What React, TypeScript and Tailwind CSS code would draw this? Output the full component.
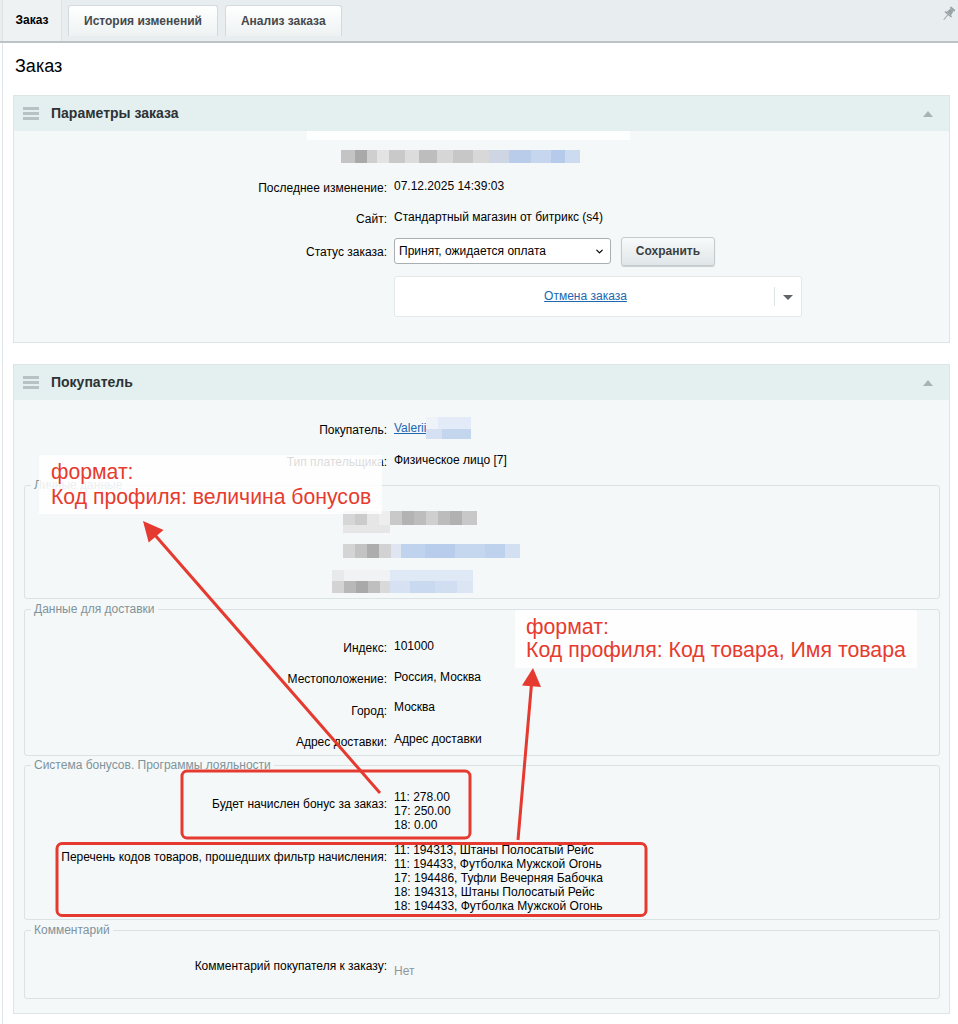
import React from 'react'
import { ChevronDown } from 'lucide-react'

type Seg = [number, string]

// blurred (hidden) data, drawn as soft pixel strips
function Blur({ segs, className = '' }: { segs: Seg[]; className?: string }) {
  return (
    <div className={`flex blur-[0.6px] ${className}`}>
      {segs.map(([w, c], i) => (
        <div key={i} className="h-full shrink-0" style={{ width: w, background: c }} />
      ))}
    </div>
  )
}

function Row({
  label,
  children,
  inner = false,
  className = 'h-[32px] pt-[8px]',
  labelClass = 'pt-[2px]',
}: {
  label: React.ReactNode
  children?: React.ReactNode
  inner?: boolean
  className?: string
  labelClass?: string
}) {
  return (
    <div className={`flex gap-[7px] ${className}`}>
      <div className={`${inner ? 'w-[362px]' : 'w-[373px]'} shrink-0 text-right ${labelClass}`}>{label}</div>
      <div className="min-w-0 flex-1">{children}</div>
    </div>
  )
}

function Panel({ title, children, className = '' }: { title: string; children: React.ReactNode; className?: string }) {
  return (
    <div className={`ml-[10px] mr-[8px] border border-[#dde5e7] bg-[#f5f8f9] ${className}`}>
      <div className="flex h-[35px] items-center bg-[#e4eff0] pl-[9px] pr-[16px]">
        <div className="flex w-[16px] flex-col gap-[2px]">
          <div className="h-[3px] bg-[#b8c2c4]" />
          <div className="h-[3px] bg-[#b8c2c4]" />
          <div className="h-[3px] bg-[#b8c2c4]" />
        </div>
        <span className="ml-[12px] text-[14px] font-bold text-[#2d3234]">{title}</span>
        <span className="ml-auto h-0 w-0 border-x-[5px] border-b-[6px] border-x-transparent border-b-[#a9b3b6]" />
      </div>
      {children}
    </div>
  )
}

function Fieldset({ legend, children, className = '' }: { legend: string; children: React.ReactNode; className?: string }) {
  return (
    <fieldset className={`ml-[10px] mr-[9px] rounded-[3px] border border-[#dae2e4] ${className}`}>
      <legend className="ml-[6px] px-[3px] text-[12px] leading-[15px] text-[#7f9399]">{legend}</legend>
      {children}
    </fieldset>
  )
}

function Tab({ children }: { children: React.ReactNode }) {
  return (
    <div className="mt-[5px] flex h-[31px] items-center rounded-t-[3px] border border-b-0 border-[#d3dadd] bg-gradient-to-b from-white to-[#eef2f3] px-[15px] text-[12px] font-bold text-[#45494b]">
      {children}
    </div>
  )
}

export default function App() {
  return (
    <div className="relative min-h-screen w-[958px] bg-white font-['Liberation_Sans',Arial,sans-serif] text-[12px] leading-[15px] text-black">
      {/* tabs */}
      <div className="flex h-[43px] items-start border-b-2 border-[#bcc3c6] bg-[#e8edef]">
        <div className="ml-[2px] flex h-[41px] w-[60px] items-center justify-center border-x border-[#dde3e5] bg-[#eef2f3] text-[12px] font-bold">
          Заказ
        </div>
        <div className="ml-[6px] flex gap-[7px]">
          <Tab>История изменений</Tab>
          <Tab>Анализ заказа</Tab>
        </div>
        <svg className="ml-auto mr-[3px] mt-[6px]" width="13" height="16" viewBox="0 0 13 16">
          <g transform="rotate(40 6.5 8)" fill="#9aa3a6">
            <rect x="3.5" y="0.5" width="6" height="2" rx="0.5" />
            <path d="M4.5 2.5h4l0.8 5h-5.6z" />
            <rect x="2.2" y="7.5" width="8.6" height="1.6" rx="0.5" />
            <rect x="6" y="9" width="1" height="6.5" />
          </g>
        </svg>
      </div>

      <div className="ml-[2px] border-l border-[#dfe5e8] pb-[10px]">
        <h1 className="pl-[12px] pt-[12px] text-[18px] leading-[22px] font-normal">Заказ</h1>

        {/* Параметры заказа */}
        <Panel title="Параметры заказа" className="mt-[18px]">
          <div className="h-[38px]">
            <Blur className="ml-[293px] h-[9px]" segs={[[323, '#fdfefe']]} />
            <Blur
              className="ml-[327px] mt-[10px] h-[13px]"
              segs={[
                [14, '#c4c4c4'], [12, '#a9a9a9'], [10, '#cfcfcf'], [12, '#e3e3e3'], [16, '#c9c9c9'],
                [14, '#dcdcdc'], [18, '#bdbdbd'], [16, '#d6d6d6'], [20, '#c7c7c7'], [16, '#d8d8d8'],
                [20, '#cdd6e2'], [22, '#b9cdea'], [20, '#c6d6ee'], [14, '#b6cbeb'], [15, '#cddbf0'],
              ]}
            />
          </div>
          <Row label="Последнее изменение:" className="h-[32px] pt-[10px]">07.12.2025 14:39:03</Row>
          <Row label="Сайт:" className="h-[32px] pt-[9px]">Стандартный магазин от битрикс (s4)</Row>
          <div className="flex h-[35px] items-center gap-[7px] pt-px">
            <div className="w-[373px] shrink-0 pt-[2px] text-right">Статус заказа:</div>
            <div className="relative flex h-[26px] w-[217px] items-center rounded-[3px] border border-[#a9b0b3] bg-white pl-[4px] pt-px">
              Принят, ожидается оплата
              <ChevronDown className="absolute right-[5px] top-[7px]" size={11} strokeWidth={2.6} />
            </div>
            <button className="ml-[3px] h-[29px] w-[94px] rounded-[3px] border border-[#c3cbce] bg-gradient-to-b from-[#f8fafa] to-[#e0e6e8] text-[12px] font-bold text-[#3a3f41] shadow-[0_1px_1px_rgba(0,0,0,0.18)]">
              Сохранить
            </button>
          </div>
          <div className="ml-[380px] mt-[8px] flex h-[41px] w-[408px] items-center rounded-[3px] border border-[#e3e9eb] bg-white">
            <div className="flex-1 pl-[2px] text-center">
              <a className="text-[#2067b0] underline">Отмена заказа</a>
            </div>
            <div className="h-[19px] w-px bg-[#dde3e5]" />
            <div className="flex w-[26px] justify-center pt-[2px]">
              <span className="h-0 w-0 border-x-[5px] border-t-[5px] border-x-transparent border-t-[#5f6568]" />
            </div>
          </div>
          <div className="h-[25px]" />
        </Panel>

        {/* Покупатель */}
        <Panel title="Покупатель" className="mt-[21px]">
          <div className="h-[13px]" />
          <Row label="Покупатель:">
            <div className="flex items-start">
              <a className="text-[#2067b0] underline">Valerii</a>
              <div className="-mt-[4px] flex flex-col">
                <Blur className="h-[12px]" segs={[[12, '#eef3fa'], [33, '#e2ebf7']]} />
                <Blur className="h-[10px]" segs={[[16, '#d5e1f2'], [29, '#c4d5ee']]} />
              </div>
            </div>
          </Row>
          <Row label="Тип плательщика:">Физическое лицо [7]</Row>

          <Fieldset legend="Личные данные" className="mt-[1px]">
            <div className="pt-[9px]">
              <div className="h-[32px] pl-[318px] pt-[9px]">
                <Blur
                  className="h-[14px]"
                  segs={[[12, '#d6d6d6'], [12, '#cbcbcb'], [12, '#e6e6e6'], [11, '#eeeeee'], [12, '#c9c9c9'], [12, '#b3b3b3'], [12, '#bdbdbd'], [12, '#cfcfcf'], [12, '#bcbcbc'], [12, '#b1b1b1'], [15, '#c8c8c8']]}
                />
                <Blur className="h-[8px]" segs={[[47, '#e6e6e6']]} />
              </div>
              <div className="h-[32px] pl-[318px] pt-[10px]">
                <Blur
                  className="h-[14px]"
                  segs={[[12, '#d4d4d4'], [12, '#c3c3c3'], [12, '#adadad'], [12, '#d2d2d2'], [10, '#dfe6f1'], [24, '#bfd2ee'], [30, '#b8cdeb'], [30, '#c5d6ef'], [20, '#bed1ed'], [15, '#d3e0f2']]}
                />
              </div>
              <div className="h-[32px] pl-[307px] pt-[4px]">
                <Blur className="h-[11px]" segs={[[12, '#e7e9eb'], [46, '#f0f2f4'], [83, '#dfe8f5']]} />
                <Blur
                  className="h-[12px]"
                  segs={[[12, '#d3d3d3'], [12, '#b8b8b8'], [12, '#a9a9a9'], [12, '#bfbfbf'], [10, '#d9d9d9'], [20, '#d6e2f3'], [25, '#c9d9f0'], [22, '#d1def2'], [16, '#dbe5f4']]}
                />
              </div>
            </div>
          </Fieldset>

          <Fieldset legend="Данные для доставки" className="mt-[3px]">
            <div className="pt-[12px]">
              <Row inner label="Индекс:" className="h-[31.5px] pt-[10px]">101000</Row>
              <Row inner label="Местоположение:" className="h-[31.5px] pt-[9px]">Россия, Москва</Row>
              <Row inner label="Город:" className="h-[31.5px] pt-[8px]" labelClass="pt-[4px]">Москва</Row>
              <Row inner label="Адрес доставки:" className="h-[31.5px] pt-[8px]" labelClass="pt-[3px]">Адрес доставки</Row>
            </div>
          </Fieldset>

          <Fieldset legend="Система бонусов. Программы лояльности" className="mt-[2px]">
            <div className="pb-[6px] pt-[17px] leading-[14px]">
              <Row inner label="Будет начислен бонус за заказ:" className="" labelClass="pt-[7px]">
                <div>11: 278.00</div>
                <div>17: 250.00</div>
                <div>18: 0.00</div>
              </Row>
              <Row inner label="Перечень кодов товаров, прошедших фильтр начисления:" className="mt-[11px]" labelClass="pt-[7px]">
                <div>11: 194313, Штаны Полосатый Рейс</div>
                <div>11: 194433, Футболка Мужской Огонь</div>
                <div>17: 194486, Туфли Вечерняя Бабочка</div>
                <div>18: 194313, Штаны Полосатый Рейс</div>
                <div>18: 194433, Футболка Мужской Огонь</div>
              </Row>
            </div>
          </Fieldset>

          <Fieldset legend="Комментарий" className="mt-[3px]">
            <Row inner label="Комментарий покупателя к заказу:" className="h-[60px] pt-[21px]" labelClass="">
              <div className="pt-[5px] text-[#8f9598]">Нет</div>
            </Row>
          </Fieldset>
          <div className="h-[14px]" />
        </Panel>
      </div>

      {/* annotations over the screenshot */}
      <div className="absolute left-[39px] top-[455px] h-[59px] w-[343px] bg-white/85 pl-[12px] pt-[4px] text-[21.2px] leading-[25px] text-[#e63b2e]">
        <div>формат:</div>
        <div>Код профиля: величина бонусов</div>
      </div>
      <div className="absolute left-[515px] top-[610px] h-[58px] w-[402px] bg-white/90 pl-[11px] pt-[6px] text-[21.3px] leading-[23px] text-[#e63b2e]">
        <div>формат:</div>
        <div>Код профиля: Код товара, Имя товара</div>
      </div>
      <svg className="pointer-events-none absolute left-0 top-0" width="958" height="1024" viewBox="0 0 958 1024">
        <g stroke="#e53a30" strokeWidth="3" fill="none">
          <rect x="182" y="771" width="288" height="67" rx="5" />
          <rect x="57" y="843.5" width="589" height="72" rx="5" />
          <line x1="380" y1="793" x2="154" y2="534" />
          <line x1="518" y1="840" x2="531.5" y2="684" />
        </g>
        <g fill="#e53a30">
          <polygon points="143,521 163.5,530 148.7,542.6" />
          <polygon points="533,668 541,687 522,685.5" />
        </g>
      </svg>
    </div>
  )
}
